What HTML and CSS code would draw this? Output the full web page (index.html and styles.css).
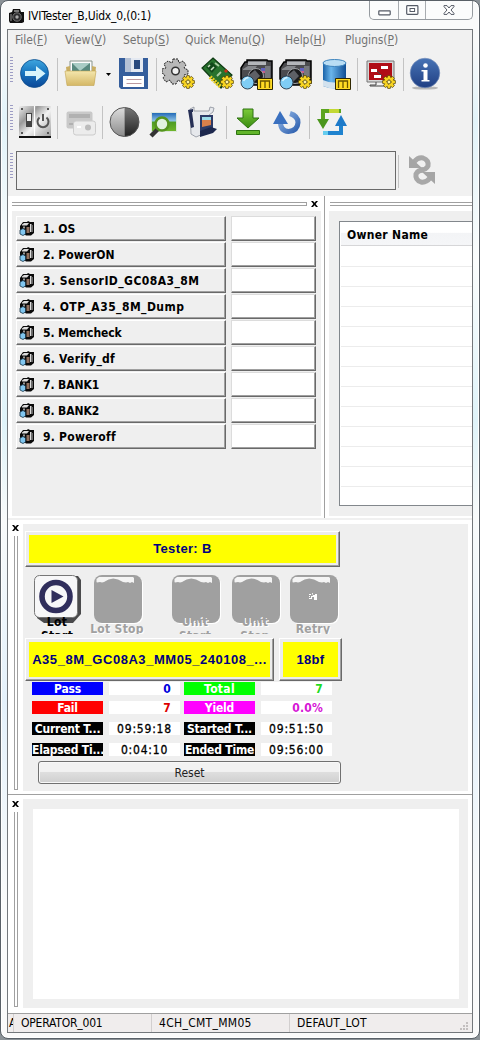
FILE: index.html
```
<!DOCTYPE html>
<html lang="en">
<head>
<meta charset="utf-8">
<title>IVITester_B,Uidx_0,(0:1)</title>
<link rel="stylesheet" href="styles.css">
</head>
<body>
<svg class="defs" width="0" height="0">
  <defs>
    <linearGradient id="blue" x1="0" y1="0" x2="0" y2="1"><stop offset="0" stop-color="#3fa6df"/><stop offset=".5" stop-color="#1672bd"/><stop offset="1" stop-color="#0b4797"/></linearGradient>
    <linearGradient id="info" x1="0" y1="0" x2="0" y2="1"><stop offset="0" stop-color="#4773b5"/><stop offset="1" stop-color="#203f83"/></linearGradient>
    <linearGradient id="tan" x1="0" y1="0" x2="0" y2="1"><stop offset="0" stop-color="#f4e6ad"/><stop offset="1" stop-color="#d5b866"/></linearGradient>
    <linearGradient id="metal" x1="0" y1="0" x2="1" y2="1"><stop offset="0" stop-color="#eee"/><stop offset=".3" stop-color="#999"/><stop offset=".55" stop-color="#f2f2f2"/><stop offset="1" stop-color="#999"/></linearGradient>
    <linearGradient id="cyl" x1="0" y1="0" x2="1" y2="0"><stop offset="0" stop-color="#1a62a8"/><stop offset=".35" stop-color="#6bb6ec"/><stop offset="1" stop-color="#0f4d94"/></linearGradient>
    <linearGradient id="green" x1="0" y1="0" x2="0" y2="1"><stop offset="0" stop-color="#7ccb3a"/><stop offset="1" stop-color="#388a10"/></linearGradient>
    <linearGradient id="lgrey" x1="0" y1="0" x2="0" y2="1"><stop offset="0" stop-color="#ddd"/><stop offset="1" stop-color="#8b8b8b"/></linearGradient>
    <linearGradient id="dgrey" x1="0" y1="0" x2="0" y2="1"><stop offset="0" stop-color="#777"/><stop offset="1" stop-color="#222"/></linearGradient>
    <linearGradient id="photo" x1="0" y1="0" x2="0" y2="1"><stop offset="0" stop-color="#1d65b5"/><stop offset=".45" stop-color="#8fc4e6"/><stop offset=".5" stop-color="#4d9c25"/><stop offset="1" stop-color="#71b62c"/></linearGradient>
    <linearGradient id="swirl" x1="0" y1="0" x2="1" y2="1"><stop offset="0" stop-color="#8fb4e4"/><stop offset="1" stop-color="#2d5fae"/></linearGradient>
    <symbol id="gearbadge" viewBox="0 0 14 14">
      <path d="M5.7 .6h2.6l.4 2 1.8-1.2 1.9 1.9-1.2 1.8 2.2.5v2.8l-2.2.4 1.2 1.9-1.9 1.8-1.8-1.2-.4 2.1H5.7l-.5-2.1-1.8 1.2-1.9-1.8 1.2-1.9-2.1-.4V5.6l2.1-.5-1.2-1.8 1.9-1.9 1.8 1.2z" fill="#f8d522" stroke="#4d3c00" stroke-width=".7"/>
      <path d="M7 4.600 9.400 7 7 9.400 4.600 7z" fill="#fff3a0" stroke="#3b2d00" stroke-width=".9"/>
    </symbol>
    <symbol id="camera" viewBox="0 0 34 32">
      <path d="M7 1h20l1 1h4v22h-4v2H12L1 20V9l4-6h2z" fill="#4b4b4e" stroke="#000" stroke-width="1.500"/>
      <path d="M8 2.500h18v3.500H8z" fill="#b4b6ba"/><path d="M3 10l5-3h9l-3 4H3z" fill="#85878b"/>
      <path d="M25 7h5.500v17H25z" fill="#77797e"/><path d="M21 9h4v3h-4z" fill="#6262c0"/><path d="M21 12h4v2h-4z" fill="#c85c88"/>
      <circle cx="16" cy="17" r="7.500" fill="#1c1c1e" stroke="#a0a2a6"/>
      <path d="M8 17l7-6 5 6-8 8z" fill="#5e6066"/>
      <circle cx="7.500" cy="23.500" r="6.500" fill="#7fcdf5" stroke="#234" stroke-width=".9"/><path d="M3.500 22q2-3.500 5-3.500" stroke="#d7f3ff" stroke-width="1.500" fill="none"/>
    </symbol>
    <symbol id="mbadge" viewBox="0 0 16 12"><path d="M.5.5h15v11H.5z" fill="#ffdb24" stroke="#302700"/><path d="M3.500 10V3h9v7M8 3v7" fill="none" stroke="#6b5600" stroke-width="1.300"/></symbol>
    <symbol id="mini" viewBox="0 0 16 15">
      <path d="M1 5 4 1h4l1-1 2 1h4v11l-3 2.500H7L1 10z" fill="#0a0a0a"/>
      <path d="M3 3.500 5 2h5L8 4.500H3zM11 3h1.500v8H11z" fill="#dcdcdc"/><path d="M7.500 6h3v6h-3z" fill="#90705f"/><path d="M12.500 4H14v7h-1.500z" fill="#666"/><path d="M4 5.500h2v2H4z" fill="#999"/>
      <path d="M1 9 4 7.500 6.500 9v4L4 14.500 1 13z" fill="#81c6ef" stroke="#163346" stroke-width=".8"/>
    </symbol>
    <symbol id="offbtn" viewBox="0 0 49 49">
      <rect x="1" y="1" width="48" height="48" rx="8" fill="#fff"/>
      <rect x="0" y="0" width="48" height="48" rx="8" fill="#a0a0a0"/>
      <path d="M2.500 7V4L5 2h34l1 1v5l-2-1-2 1-2-1-2 .5-3-.5q-10-7-19 0l-2 .5-2-.5-3 .5z" fill="#f4f4f4"/>
    </symbol>
    <symbol id="close" viewBox="0 0 7 6"><path d="M0 0h2l1.500 1.700L5 0h2L4.600 3 7 6H5L3.500 4.300 2 6H0l2.400-3z" fill="#000"/></symbol>
  </defs>
</svg>

<div class="window">
  <header class="titlebar">
    <svg class="app-icon" viewBox="8 6 17 17" width="17" height="17"><path d="M9 12l3-1 1-3h7l1 3h3v10l-2 1H10l-1-2z" fill="#111"/><path d="M14 9h5v2h-5z" fill="#777"/><circle cx="17" cy="16" r="4.200" fill="#2c2c2e" stroke="#777"/><circle cx="17" cy="16" r="1.700" fill="#aaa"/><path d="M10 13h2v7h-2z" fill="#555"/></svg>
    <h1 class="title">IVITester_B,Uidx_0,(0:1)</h1>
    <div class="controls">
      <span><svg viewBox="0 0 13 6" width="13" height="6"><rect x=".8" y=".8" width="11.400" height="4" rx=".5" fill="#fff" stroke="#555b66" stroke-width="1.200"/></svg></span>
      <span><svg viewBox="0 0 13 10" width="13" height="10"><rect x=".7" y=".7" width="11.200" height="8.600" rx=".8" fill="#fff" stroke="#555b66" stroke-width="1.200"/><rect x="4" y="3.500" width="4.600" height="3" fill="#fff" stroke="#555b66"/></svg></span>
      <span><svg viewBox="0 0 12 10" width="12" height="10"><path d="M1 .6h3L6 3 8 .6h3v1L8 5l3 3.400v1H8L6 7 4 9.400H1v-1L4 5 1 1.600z" fill="#fff" stroke="#555b66"/></svg></span>
    </div>
  </header>

  <div class="client">
    <nav class="menu"><span>File(<u>F</u>)</span><span>View(<u>V</u>)</span><span>Setup(<u>S</u>)</span><span>Quick Menu(<u>Q</u>)</span><span>Help(<u>H</u>)</span><span>Plugins(<u>P</u>)</span></nav>

    <div class="toolbar tb-main">
      <i class="grip"></i>
      <svg viewBox="20 54 30 40"><circle cx="34.500" cy="73.500" r="14" fill="url(#blue)" stroke="#0d4c8c" stroke-width=".8"/><path d="M25 71h11v-5l9.500 7.500-9.500 7.500v-5H25z" fill="#d5f3fb"/></svg>
      <i class="sep"></i>
      <svg viewBox="64 54 34 40"><path d="M70 61h22v13H70z" fill="#fcfcfc" stroke="#88948c"/><path d="M72 63h18v9H72z" fill="#58897f"/><path d="M72 63h18l-10 8z" fill="#a9ccc5"/><path d="M66 67l4-1v5h22v-5l4 1-2 17H68z" fill="#c9ae63"/><path d="M65 71h31l-2 14.500H67z" fill="url(#tan)" stroke="#c3a553" stroke-width=".6"/></svg>
      <svg viewBox="98 54 20 40"><path d="M106 73h5l-2.500 3z" fill="#000"/></svg>
      <svg viewBox="118 54 32 40"><path d="M119 58h29v31h-27l-2-2z" fill="#355e9c"/><path d="M125 58h18v14h-18z" fill="#e4e9f1"/><path d="M125 58h6v14h-6z" fill="#b4c1d5"/><path d="M134 60h6v9h-6z" fill="#294a7e"/><path d="M123 76h21v11h-21z" fill="#fff"/><path d="M126.500 79.500h15M126.500 83.500h15" stroke="#bb9aa0"/></svg>
      <i class="sep"></i>
      <svg viewBox="162 54 34 40"><path d="M173 59h5l1 4 4-2 3 4-2 3 4 2v4l-4 1 1 4-4 3-3-2-2 4h-4l-2-4-4 2-3-4 2-3-3-2v-4l4-1-2-4 4-3 4 2z" fill="#b8b8b8" stroke="#222" stroke-dasharray="2 1"/><circle cx="175.500" cy="71" r="3.800" fill="#f0f0f0" stroke="#333" stroke-width="1.500"/><use href="#gearbadge" x="181" y="75" width="14" height="14"/></svg>
      <svg viewBox="196 54 40 40"><path d="M213 58l19 17-11 13-19-20z" fill="#27722d" stroke="#0f3a13" stroke-width="1.200"/><path d="M206 67l6-5 5 5-5 6z" fill="#12491a"/><path d="M208 67l2-2M211 70l3-3" stroke="#c7ddc0" stroke-width="1.600"/><path d="M215 63l4 3M217 76l4-4" stroke="#a8cba0" stroke-width="1.800"/><path d="M225 70l2 2" stroke="#c93018" stroke-width="3"/><path d="M210 77l11 10" stroke="#e8ce20" stroke-width="4" stroke-dasharray="2 1"/><use href="#gearbadge" x="220" y="75" width="14" height="14"/></svg>
      <svg viewBox="236 54 40 40"><use href="#camera" x="240" y="59" width="34" height="32"/><use href="#mbadge" x="257" y="78" width="16" height="12"/></svg>
      <svg viewBox="276 54 40 40"><use href="#camera" x="279" y="59" width="34" height="32"/><use href="#gearbadge" x="298" y="75" width="14" height="14"/></svg>
      <svg viewBox="316 54 38 40"><path d="M323 63v23q12 5 23 0V63z" fill="url(#cyl)"/><path d="M323 80q11 5 23 0v6q-11 5-23 0z" fill="#d3e2ee"/><ellipse cx="334.500" cy="63" rx="11.500" ry="3.500" fill="#b9ddf4" stroke="#3e84bd"/><use href="#mbadge" x="335" y="78" width="16" height="12"/></svg>
      <i class="sep"></i>
      <svg viewBox="361 54 39 40"><path d="M367 61h27v21h-27z" fill="#d6d6d6" stroke="#777"/><path d="M369 63h23v17h-23z" fill="#b00d16"/><path d="M371 69h6v3h-6zM381 66h7v3h-7zM374 75h7v3h-7z" fill="#fff"/><path d="M377 71l5 5M376 82v3h-6v1h16" stroke="#444" fill="none"/><use href="#gearbadge" x="382" y="75" width="14" height="14"/></svg>
      <i class="sep"></i>
      <svg viewBox="406 54 38 40"><ellipse cx="425" cy="88" rx="13" ry="1.600" fill="#b7b7b7"/><circle cx="425" cy="73" r="14.800" fill="url(#info)" stroke="#7891ba" stroke-width=".6"/><circle cx="425.500" cy="65.500" r="2.300" fill="#fff"/><path d="M421.500 70h6v10h2v1.500h-8V80h2v-8.500h-2z" fill="#fff"/></svg>
    </div>

    <div class="toolbar tb-tools">
      <i class="grip"></i>
      <svg viewBox="18 102 35 40"><rect x="19" y="106" width="32" height="32" rx="1" fill="url(#metal)"/><path d="M19 137h32" stroke="#111" stroke-width="2"/><path d="M34.500 106v30" stroke="#fff" stroke-width="1.200"/><path d="M26 113h6v14h-6z" fill="#444"/><path d="M27 114h4v7h-4z" fill="#eee"/><path d="M39.500 117.500a5.500 5.500 0 1 0 7 0M43 114v7" fill="none" stroke="#555" stroke-width="2"/><path d="M21 108h2v2h-2zM47 108h2v2h-2zM21 132h2v2h-2zM47 132h2v2h-2z" fill="#555"/></svg>
      <i class="sep"></i>
      <svg viewBox="62 102 36 40"><rect x="66.500" y="111.500" width="26" height="17" rx="2" fill="#c9c9c9"/><path d="M69 114h21v4H69zM69 123h8v2h-8z" fill="#b1b1b1"/><rect x="73.500" y="121" width="22" height="14" rx="2.500" fill="#ececec" stroke="#ccc"/><circle cx="88" cy="127.500" r="3" fill="#bbb"/><path d="M77 127h4" stroke="#fff" stroke-width="2"/></svg>
      <i class="sep"></i>
      <svg viewBox="107 102 36 40"><path d="M124.500 107.500a14.500 14.500 0 0 0 0 29z" fill="url(#lgrey)"/><path d="M124.500 107.500a14.500 14.500 0 0 1 0 29z" fill="url(#dgrey)"/><circle cx="124.500" cy="122" r="14.500" fill="none" stroke="#555"/></svg>
      <svg viewBox="143 102 41 40"><path d="M151.500 112.500h25v19h-25z" fill="url(#photo)" stroke="#dde8dd"/><path d="M158 129l-7 7" stroke="#333" stroke-width="4.500"/><circle cx="162" cy="124" r="6.500" fill="#e2f3df" stroke="#56951f" stroke-width="2.600"/></svg>
      <svg viewBox="184 102 38 40"><path d="M190 109l4-2v4h15l1-4 4 1-1 4-4 3 1 16-14 6-5-3z" fill="#e6e8ec" stroke="#8a8f9b" stroke-width=".8"/><path d="M188 110l5-1v3h-1l2 15-3 1z" fill="#252e55"/><path d="M200 115h13v14l-13 3z" fill="#2d3b67"/><path d="M202 117h9v8l-9 2z" fill="#d9804b"/><path d="M202 117h9v3h-9z" fill="#9cdbe8"/><path d="M211 127l6 2-4 4-13 4v-6z" fill="#1d284e"/></svg>
      <i class="sep"></i>
      <svg viewBox="230 102 34 40"><path d="M243 109h10v9h6l-11 10-11-10h6z" fill="url(#green)" stroke="#2d7310"/><path d="M236.500 130.500h23v4h-23z" fill="#62b52b" stroke="#2d7310"/></svg>
      <svg viewBox="264 102 42 40"><path d="M280.500 122q0 9 8 9.500 9-.5 9.500-9 0-6.500-8-9" fill="none" stroke="url(#swirl)" stroke-width="5"/><path d="M273 124l7-13 8 13z" fill="#3a70bf"/></svg>
      <i class="sep"></i>
      <svg viewBox="313 102 37 40"><path d="M323 121v-10h18" fill="none" stroke="#5da51f" stroke-width="4"/><path d="M317 119h12l-6 10z" fill="#4b961c"/><path d="M341 123v10h-18" fill="none" stroke="#1f83cf" stroke-width="4"/><path d="M335 126h12l-6-11z" fill="#1d7ac9"/><path d="M323 131v4h5v-4z" fill="#65ccee"/><path d="M329 109h10v4h-10z" fill="#c3d834"/></svg>
    </div>

    <div class="toolbar tb-field">
      <i class="grip"></i><div class="field"></div><i class="sep"></i>
      <svg viewBox="404 151 34 40"><g fill="none" stroke="#a8a8a8" stroke-width="5"><path d="M414 162q4-5 9-4 6 2 5 8-2 4-7 4"/><path d="M430 178q-4 5-9 4-6-2-5-8 2-4 7-4"/></g><path d="M409 156v12h13zM435 184v-12h-13z" fill="#a5a5a5"/></svg>
    </div>

    <div class="docks">
      <section class="dock dock-list">
        <div class="dockbar"><i class="lines"></i><svg class="x" viewBox="0 0 7 6"><use href="#close"/></svg></div>
        <ol class="steps">
          <li><span class="step"><svg><use href="#mini"/></svg>1. OS</span><b></b></li>
          <li><span class="step"><svg><use href="#mini"/></svg>2. PowerON</span><b></b></li>
          <li><span class="step wide"><svg><use href="#mini"/></svg>3. SensorID_GC08A3_8M</span><b></b></li>
          <li><span class="step wide"><svg><use href="#mini"/></svg>4. OTP_A35_8M_Dump</span><b></b></li>
          <li><span class="step tight"><svg><use href="#mini"/></svg>5. Memcheck</span><b></b></li>
          <li><span class="step mid"><svg><use href="#mini"/></svg>6. Verify_df</span><b></b></li>
          <li><span class="step tight"><svg><use href="#mini"/></svg>7. BANK1</span><b></b></li>
          <li><span class="step tight"><svg><use href="#mini"/></svg>8. BANK2</span><b></b></li>
          <li><span class="step mid"><svg><use href="#mini"/></svg>9. Poweroff</span><b></b></li>
        </ol>
      </section>
      <section class="dock dock-table">
        <div class="dockbar"><i class="lines"></i></div>
        <div class="table-pane"><div class="table"><div class="th">Owner Name</div><div class="rows"></div></div></div>
      </section>
    </div>

    <section class="side-dock tester">
      <div class="sidebar"><svg class="x" viewBox="0 0 7 6"><use href="#close"/></svg><i class="vlines"></i></div>
      <div class="pane">
        <div class="yellow name">Tester: B</div>
        <div class="actions">
          <div class="act on"><svg viewBox="0 0 49 49"><path d="M7 1h37l3 4v34l-8 9H10l-7-5V5z" fill="#4a4a4c"/><rect x=".5" y=".5" width="43" height="42" rx="5" fill="#f7f7f8" stroke="#777"/><circle cx="22" cy="21.500" r="14" fill="#f7f7f8" stroke="#302e5c" stroke-width="5.600"/><path d="M17.500 15l12 6.500-12 6.500z" fill="#302e5c"/></svg><span>Lot<br>Start</span></div>
          <div class="act one"><svg><use href="#offbtn"/></svg><span>Lot Stop</span></div>
          <div class="act"><svg><use href="#offbtn"/></svg><span>Unit<br>Start</span></div>
          <div class="act"><svg><use href="#offbtn"/></svg><span>Unit<br>Stop</span></div>
          <div class="act one"><svg viewBox="0 0 49 49"><use href="#offbtn"/><path d="M19 19h2v1h-2zM22 18h1v2h2v-1h2v6h-3v-3h-2v2h-3v-1h2v-2h2zM19 21h1v1h-1z" fill="#fff"/></svg><span>Retry</span></div>
        </div>
        <div class="ids"><div class="yellow model">A35_8M_GC08A3_MM05_240108_...</div><div class="yellow code">18bf</div></div>
        <div class="stats">
          <span class="k pass">Pass</span><span class="v n cpass">0</span><span class="k total">Total</span><span class="v n ctotal">7</span>
          <span class="k fail">Fail</span><span class="v n cfail">7</span><span class="k yield">Yield</span><span class="v n cyield">0.0%</span>
          <span class="k">Current T...</span><span class="v">09:59:18</span><span class="k">Started T...</span><span class="v">09:51:50</span>
          <span class="k">Elapsed Ti...</span><span class="v">0:04:10</span><span class="k">Ended Time</span><span class="v">09:56:00</span>
        </div>
        <button class="reset">Reset</button>
      </div>
    </section>

    <section class="side-dock log">
      <div class="sidebar"><svg class="x" viewBox="0 0 7 6"><use href="#close"/></svg><i class="vlines"></i></div>
      <div class="pane"><div class="output"></div></div>
    </section>

    <footer class="status"><span class="clip">A</span><span class="op">OPERATOR_001</span><span class="model-id">4CH_CMT_MM05</span><span class="lot">DEFAUT_LOT</span>
      <svg viewBox="0 0 9 9" width="9" height="9"><path d="M6 0h2v2H6zM3 3h2v2H3zM6 3h2v2H6zM0 6h2v2H0zM3 6h2v2H3zM6 6h2v2H6z" fill="#c3bfbf"/></svg>
    </footer>
  </div>
</div>
</body>
</html>
```
FILE: styles.css
```
* { box-sizing: border-box; }
html, body { margin: 0; padding: 0; }
body {
  width: 480px; height: 1040px; overflow: hidden; background: #8b9297;
  font-family: "DejaVu Sans Condensed", "DejaVu Sans", sans-serif; font-size: 12px; font-stretch: condensed; color: #000;
}
svg { display: block; }
.defs { position: absolute; }

.window {
  width: 480px; height: 1039px; border: 1px solid #596067; border-radius: 8px; padding: 0 6px;
  background: linear-gradient(180deg, #f9fafa 0, #f9fafa 40px, #e2f3f9 120px, #fafcfc 260px, #dff3f9 420px, #f8fafa 520px, #e4f1fb 700px, #f9fafa 900px, #fafafa 100%);
  box-shadow: inset 0 0 0 1px #fff;
}
.titlebar { height: 28px; display: flex; align-items: flex-start; padding-left: 1px; }
.app-icon { margin-top: 6px; }
.title { flex: 1; margin: 7px 0 0 3px; font-size: 12px; line-height: 16px; font-weight: 400; letter-spacing: -.2px; }
.controls { display: grid; grid-template-columns: 28px 27px 47px; height: 19px; border: 1px solid #969ba0; border-top: 0; border-radius: 0 0 5px 5px; background: #fbfcfc; }
.controls span { display: flex; justify-content: center; align-items: center; }
.controls span + span { border-left: 1px solid #a8acb0; }
.controls span:first-child { padding-top: 5px; }

.client { height: 1004px; width: 466px; border: 1px solid #73777b; background: #f0f0f0; overflow: hidden; display: flex; flex-direction: column; }
.menu { height: 23px; flex: none; display: grid; grid-template-columns: 50px 58px 62px 100px 60px auto; padding: 2px 0 0 7px; line-height: 16px; color: #737373; background: #f1f1f1; letter-spacing: -.05px; }
.menu span { white-space: nowrap; }
.menu u { text-underline-offset: 1px; }

.toolbar { display: grid; flex: none; background: #f1f1f1; }
.toolbar svg { width: 100%; height: 40px; }
.tb-main { height: 48px; padding-top: 1px; grid-template-columns: 12px 30px 14px 34px 20px 32px 12px 34px 40px 40px 40px 38px 7px 39px 6px 38px; }
.tb-tools { height: 48px; padding-top: 1px; grid-template-columns: 10px 35px 9px 36px 9px 36px 41px 38px 8px 34px 42px 7px 37px; }
.tb-field { height: 47px; padding-top: 2px; grid-template-columns: 8px 380px 8px 34px; }
.grip { width: 3px; height: 27px; margin: 3px 0 0 2px; background: repeating-linear-gradient(180deg, #9d9dc4 0 1px, #f1f1f1 1px 3px); }
.tb-field .grip { margin-top: 2px; }
.sep { width: 1px; height: 33px; margin: 4px auto 0; background: #c3c3c3; }
.tb-field .sep { margin-left: 2px; }
.tb-field .field { height: 39px; border: 1px solid #696969; background: #efefef; }

.docks { height: 324px; flex: none; display: grid; grid-template-columns: 317px 147px; background: #fff; border-bottom: 2px solid #f0f0f0; }
.dock-list { border-right: 1px solid #a0a0a0; padding: 0 3px 0 4px; height: 322px; }
.dock-table { padding-left: 4px; height: 321px; }
.dockbar { height: 15px; display: flex; padding-top: 6px; gap: 4px; }
.lines { flex: 1; height: 4px; border: solid #a0a0a0; border-width: 1px 0; }
.dock-list .lines { border-right-width: 1px; }
.dock-table .lines { margin-left: 1px; }
.x { width: 7px; height: 6px; }
.dock-list .x { margin-right: 3px; margin-top: -1px; }
.steps { list-style: none; margin: 0; padding: 5px 4px 0 4px; height: 305px; background: #efefef; }
.steps li { height: 26px; display: grid; grid-template-columns: 210px 85px; column-gap: 5px; }
.step, .steps b { height: 25px; border: 1px solid; border-color: #fff #696969 #696969 #fff; box-shadow: inset -1px -1px 0 #a0a0a0; }
.steps b { background: #fff; border-color: #dcdcdc #696969 #696969 #dcdcdc; }
.step { display: flex; align-items: center; font-weight: 700; background: #efefef; white-space: nowrap; }
.step svg { width: 16px; height: 15px; margin: 0 8px 0 2px; flex: none; }
.step.wide { letter-spacing: .45px; }
.step.mid { letter-spacing: .25px; }
.step.tight { letter-spacing: -.1px; }
.table-pane { height: 305px; background: #efefef; padding: 10px 0 0 10px; }
.table { height: 285px; border: 1px solid #82878c; border-right: 0; background: #fff; padding-left: 1px; }
.th { height: 24px; border-bottom: 1px solid #d6d6d8; line-height: 27px; padding-left: 6px; font-weight: 700; letter-spacing: .3px; background: linear-gradient(#fff 45%, #f3f4f6 50%, #f5f6f8); }
.rows { height: 258px; margin-top: 1px; background: repeating-linear-gradient(180deg, #fff 0 19px, #ececec 19px 20px); }

.side-dock { flex: none; display: grid; grid-template-columns: 15px 445px; background: #fff; }
.sidebar { display: flex; flex-direction: column; align-items: center; gap: 5px; }
.vlines { width: 4px; border: 1px solid #a0a0a0; border-top: 0; flex: 1; margin-left: 1px; }
.tester { height: 275px; padding-top: 4px; border-bottom: 1px solid #a0a0a0; }
.tester .sidebar { padding: 1px 0 4px; }
.tester .pane { height: 267px; background: #efefef; padding: 7px 0 0 2px; }
.yellow { background: #ff0; border: 1px solid; border-color: #fff #696969 #696969 #fff; box-shadow: inset -1px -1px 0 #a0a0a0, inset 0 0 0 3px #ececec; color: #000080; font-weight: 700; text-align: center; white-space: nowrap; }
.name { width: 315px; height: 36px; line-height: 34px; font-family: "Liberation Sans", Arial, sans-serif; font-size: 13px; letter-spacing: .35px; }
.actions { display: grid; grid-template-columns: 60px 78px 60px 58px 60px; padding-left: 2px; margin-top: 8px; height: 59px; }
.act { width: 60px; height: 59px; overflow: hidden; display: flex; flex-direction: column; align-items: center; color: #a0a0a0; font-weight: 700; }
.act svg { width: 49px; height: 49px; flex: none; margin-left: 2px; }
.act span { line-height: 14px; margin-top: -9px; text-align: center; white-space: nowrap; text-shadow: 1px 1px 0 #fff; letter-spacing: .3px; }
.act.one span { margin-top: -2px; }
.act.on { color: #000; }
.act.on span { text-shadow: none; }
.ids { display: flex; gap: 5px; margin-top: 4px; }
.ids .yellow { height: 43px; font-family: "Liberation Sans", Arial, sans-serif; font-size: 13px; line-height: 42px; }
.model { width: 249px; letter-spacing: .54px; }
.code { width: 63px; letter-spacing: .3px; }
.stats { display: grid; grid-template-columns: 77px 75px 77px 71px; grid-template-rows: 19px 21px 21px 13px; margin: 1px 0 0 7px; font-weight: 700; line-height: 15px; }
.stats span { width: 71px; height: 13px; text-align: center; white-space: nowrap; overflow: hidden; }
.stats .k { background: #000; color: #fff; letter-spacing: -.2px; }
.stats .v { background: #fff; font-weight: 400; letter-spacing: .8px; -webkit-text-stroke: .3px #000; }
.stats .n { text-align: right; font-weight: 700; padding-right: 9px; letter-spacing: .2px; -webkit-text-stroke: 0; }
.stats .pass { background: #00f; }
.stats .total { background: #0f0; letter-spacing: .3px; }
.stats .fail { background: #f00; }
.stats .yield { background: #f0f; }
.cpass { color: #00d; }
.ctotal { color: #1fdc1f; }
.cfail { color: #d00; }
.cyield { color: #d616d6; }
.reset { display: block; width: 303px; height: 23px; margin: 5px 0 0 13px; padding: 0; border: 1px solid #707070; border-radius: 3px; background: linear-gradient(#f2f2f2 0 45%, #dedede 50%, #cfcfcf); font: inherit; color: #222; box-shadow: inset 0 0 0 1px #f8f8f8; }

.log { height: 218px; padding-top: 4px; }
.log .sidebar { padding: 2px 0 1px; height: 209px; }
.log .pane { height: 209px; background: #efefef; padding: 10px 9px 9px 10px; }
.output { height: 190px; background: #fff; }
.status { flex: 1; border-top: 1px solid #a0a0a0; background: #f0eded; display: grid; grid-template-columns: 6px 138px 138px 1fr 12px; line-height: 19px; letter-spacing: -.2px; }
.status span { border-right: 1px solid #d2cfcf; padding-left: 7px; white-space: nowrap; }
.status .clip { padding-left: 1px; overflow: hidden; }
.status .model-id { letter-spacing: .3px; }
.status .lot { border: 0; letter-spacing: .15px; }
.status svg { align-self: end; margin-bottom: 2px; }
```
